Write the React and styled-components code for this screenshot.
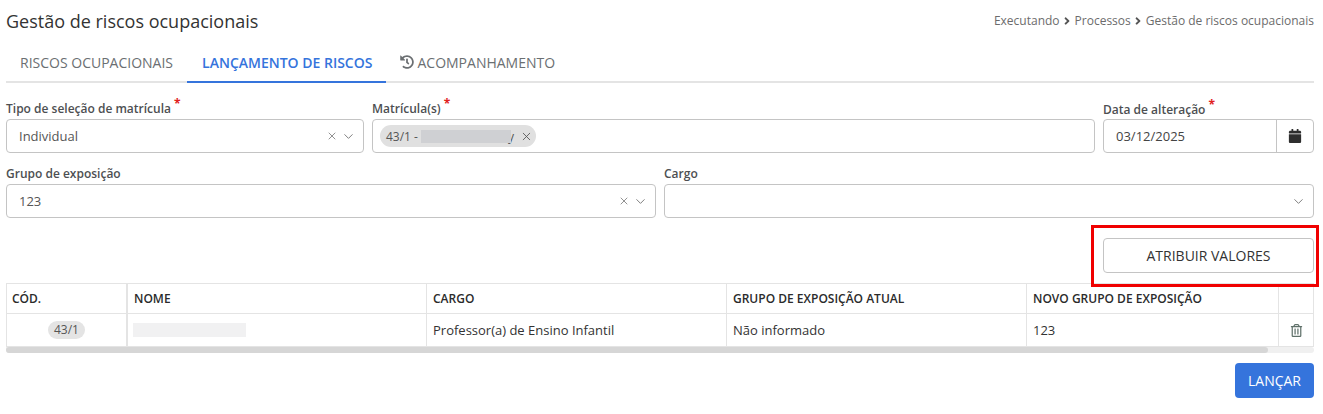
import React from 'react';
import styled, { createGlobalStyle } from 'styled-components';
import { FaCalendar, FaHistory, FaRegTrashAlt, FaAngleRight } from 'react-icons/fa';
import { ChevronDown, X } from 'lucide-react';

const Global = createGlobalStyle`
  * { box-sizing: border-box; }
  html, body { margin: 0; padding: 0; background: #fff; }
  body { font-family: "Open Sans", "Noto Sans", sans-serif; color: #333; }
`;

const Page = styled.div`
  width: 1323px;
  height: 414px;
  padding: 0 9px 0 6px;
  overflow: hidden;
`;

const Header = styled.header`
  display: flex;
  justify-content: space-between;
  align-items: center;
  height: 41px;
  margin-bottom: 2px;
`;

const Title = styled.h1`
  margin: 0;
  font-size: 18px;
  font-weight: 400;
  color: #333;
`;

const Crumbs = styled.nav`
  display: flex;
  align-items: center;
  gap: 1.5px;
  font-size: 12px;
  color: #6c6c6c;
  svg { color: #555; font-size: 12px; }
`;

const Tabs = styled.div`
  display: flex;
  height: 40px;
  border-bottom: 2px solid #e4e4e4;
`;

const Tab = styled.div`
  display: flex;
  align-items: center;
  gap: 3px;
  height: 40px;
  padding: 0 14px 0 ${p => p.$left}px;
  font-size: 14px;
  white-space: nowrap;
  color: ${p => (p.$active ? '#3574dc' : '#6b6f72')};
  font-weight: ${p => (p.$active ? 600 : 400)};
  border-bottom: 2px solid ${p => (p.$active ? '#3574dc' : 'transparent')};
  svg { font-size: 14px; }
`;

const Row = styled.div`
  display: grid;
  grid-template-columns: ${p => p.$cols};
  gap: 8px;
  margin-top: ${p => p.$top}px;
`;

const Field = styled.div`
  display: flex;
  flex-direction: column;
  min-width: 0;
`;

const Label = styled.label`
  display: flex;
  height: 21px;
  font-size: 12px;
  line-height: 21px;
  font-weight: 600;
  color: #4d4f52;
  margin-top: ${p => (p.$offset ? '1px' : 0)};
  margin-bottom: ${p => (p.$offset ? '-1px' : 0)};
`;

const Star = styled.span`
  color: #e02020;
  font-size: 12px;
  font-weight: 700;
  line-height: 12px;
  margin-left: 3px;
`;

const Control = styled.div`
  display: flex;
  align-items: center;
  height: 34px;
  padding: 0 7px 0 12px;
  border: 1px solid #c4c4c4;
  border-radius: 4px;
  font-size: 13px;
  color: #555;
  background: #fff;
`;

const ChipControl = styled(Control)`
  padding-left: 7px;
`;

const Value = styled.span`
  flex: 1;
`;

const Icons = styled.span`
  display: flex;
  align-items: center;
  gap: 3px;
  color: #6e6e6e;
`;

const Chip = styled.span`
  display: flex;
  align-items: center;
  height: 22px;
  width: 156px;
  padding: 0 3px 0 6px;
  border-radius: 11px;
  background: #e0e0e0;
  font-size: 12px;
  color: #555;
  white-space: nowrap;
  svg { margin-left: 6px; color: #555; }
`;

const Redacted = styled.span`
  position: relative;
  z-index: 1;
  display: inline-block;
  background: ${p => p.$bg};
  width: ${p => p.$w}px;
  height: ${p => p.$h}px;
`;

const NameMask = styled(Redacted)`
  margin-left: -1px;
`;

const ChipTail = styled.span`
  margin-left: -3px;
  width: 6px;
  font-size: 12px;
`;

const DateBox = styled.div`
  display: flex;
  height: 34px;
  border: 1px solid #c4c4c4;
  border-radius: 4px;
`;

const DateValue = styled.span`
  flex: 1;
  padding-left: 12px;
  line-height: 32px;
  font-size: 13px;
  color: #444;
`;

const DateButton = styled.span`
  display: flex;
  align-items: center;
  justify-content: center;
  width: 37px;
  border-left: 1px solid #c4c4c4;
  color: #2e2e2e;
  font-size: 14px;
`;

const ActionBar = styled.div`
  position: relative;
  display: flex;
  justify-content: flex-end;
  margin-top: 20px;
  height: 45px;
`;

const Highlight = styled.div`
  position: absolute;
  left: 1085px;
  top: -13px;
  width: 228px;
  height: 62px;
  border: 3px solid #f00000;
  pointer-events: none;
`;

const OutlineButton = styled.button`
  width: 211px;
  height: 35px;
  border: 1px solid #c4c4c4;
  border-radius: 4px;
  background: #fff;
  font-family: inherit;
  font-size: 14px;
  color: #333;
`;

const Table = styled.div`
  border: 1px solid #e4e4e4;
  border-bottom: 0;
  font-size: 13px;
  color: #333;
`;

const TableRow = styled.div`
  display: grid;
  grid-template-columns: 120px 299px 300px 300px 252px 1fr;
  height: ${p => p.$h}px;
  border-bottom: 1px solid #e4e4e4;
`;

const Cell = styled.div`
  display: flex;
  align-items: center;
  justify-content: ${p => (p.$center ? 'center' : 'flex-start')};
  padding: 0 6px;
  border-left: 1px solid #e4e4e4;
  &:first-child { border-left: 0; border-right: 1px solid #e4e4e4; padding: 0 5px; }
`;

const HeadCell = styled(Cell)`
  font-size: 12px;
  font-weight: 600;
  color: #2b2b2b;
`;

const CodeBadge = styled.span`
  padding: 0 6px;
  height: 18px;
  line-height: 18px;
  border-radius: 9px;
  background: #e4e4e4;
  font-size: 12px;
  color: #555;
`;

const Track = styled.div`
  height: 6px;
  background: #f0f0f0;
  border-radius: 0 3px 3px 3px;
`;

const Thumb = styled.div`
  width: 1262px;
  height: 6px;
  background: #d6d6d6;
  border-radius: 3px;
`;

const Footer = styled.div`
  display: flex;
  justify-content: flex-end;
  margin-top: 10px;
`;

const PrimaryButton = styled.button`
  width: 79px;
  height: 35px;
  border: 0;
  border-radius: 4px;
  background: #3574dc;
  color: #fff;
  font-family: inherit;
  font-size: 14px;
  font-weight: 500;
`;

const Caret = () => <ChevronDown size={15} strokeWidth={1.4} />;
const Clear = () => <X size={12} strokeWidth={1.5} />;

export default function App() {
  return (
    <Page>
      <Global />
      <Header>
        <Title>Gestão de riscos ocupacionais</Title>
        <Crumbs>
          Executando <FaAngleRight /> Processos <FaAngleRight /> Gestão de riscos ocupacionais
        </Crumbs>
      </Header>
      <Tabs>
        <Tab $left={14}>RISCOS OCUPACIONAIS</Tab>
        <Tab $left={15} $active>LANÇAMENTO DE RISCOS</Tab>
        <Tab $left={14}><FaHistory />ACOMPANHAMENTO</Tab>
      </Tabs>

      <Row $cols="358px 723px 211px" $top={15}>
        <Field>
          <Label>Tipo de seleção de matrícula<Star>*</Star></Label>
          <Control>
            <Value>Individual</Value>
            <Icons><Clear /><Caret /></Icons>
          </Control>
        </Field>
        <Field>
          <Label>Matrícula(s)<Star>*</Star></Label>
          <ChipControl>
            <Chip>
              43/1 -&nbsp;<Redacted $bg="#cfd0d3" $w={90} $h={13} /><ChipTail>y</ChipTail>
              <X size={13} strokeWidth={1.6} />
            </Chip>
          </ChipControl>
        </Field>
        <Field>
          <Label $offset>Data de alteração<Star>*</Star></Label>
          <DateBox>
            <DateValue>03/12/2025</DateValue>
            <DateButton><FaCalendar /></DateButton>
          </DateBox>
        </Field>
      </Row>

      <Row $cols="650px 650px" $top={10}>
        <Field>
          <Label>Grupo de exposição</Label>
          <Control>
            <Value>123</Value>
            <Icons><Clear /><Caret /></Icons>
          </Control>
        </Field>
        <Field>
          <Label>Cargo</Label>
          <Control>
            <Value />
            <Icons><Caret /></Icons>
          </Control>
        </Field>
      </Row>

      <ActionBar>
        <OutlineButton>ATRIBUIR VALORES</OutlineButton>
        <Highlight />
      </ActionBar>

      <Table>
        <TableRow $h={30}>
          <HeadCell>CÓD.</HeadCell>
          <HeadCell>NOME</HeadCell>
          <HeadCell>CARGO</HeadCell>
          <HeadCell>GRUPO DE EXPOSIÇÃO ATUAL</HeadCell>
          <HeadCell>NOVO GRUPO DE EXPOSIÇÃO</HeadCell>
          <HeadCell />
        </TableRow>
        <TableRow $h={33}>
          <Cell $center><CodeBadge>43/1</CodeBadge></Cell>
          <Cell><NameMask $bg="#f1f1f2" $w={113} $h={14} /></Cell>
          <Cell>Professor(a) de Ensino Infantil</Cell>
          <Cell>Não informado</Cell>
          <Cell>123</Cell>
          <Cell $center><FaRegTrashAlt color="#5f7069" size={13} /></Cell>
        </TableRow>
      </Table>
      <Track><Thumb /></Track>

      <Footer>
        <PrimaryButton>LANÇAR</PrimaryButton>
      </Footer>
    </Page>
  );
}
